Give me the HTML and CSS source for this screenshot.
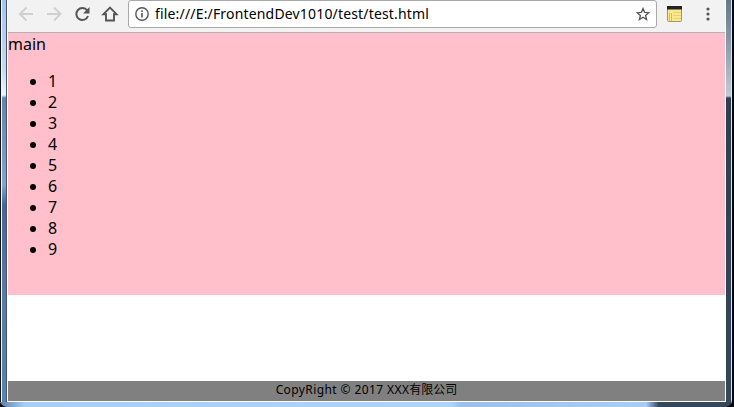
FILE: index.html
```html
<!DOCTYPE html>
<html lang="zh">
<head>
<meta charset="utf-8">
<title>test</title>
<link rel="stylesheet" href="styles.css">
</head>
<body>
<div class="window">
  <div class="edge-left"></div>
  <div class="client">
    <header class="toolbar">
      <svg class="nav" width="112" height="28" viewBox="0 0 112 28" fill="none">
        <g stroke="#d0d0d0" stroke-width="2">
          <path d="M25 14H12.500M18.500 7.500L12 14l6.500 6.500"/>
          <path d="M39 14h13M46 7.500L52.500 14 46 20.500"/>
        </g>
        <path d="M79.200 10.500A6 6 0 1 0 80 16" stroke="#555" stroke-width="2"/>
        <path d="M81.500 7v6.500H75z" fill="#555"/>
        <path d="M95.500 14.200L102 7.700l6.500 6.500H106v6.300h-8v-6.300z" stroke="#555" stroke-width="1.900"/>
      </svg>
      <div class="address">
        <svg class="info" width="14" height="14" viewBox="0 0 14 14"><circle cx="7" cy="7" r="6.200" fill="none" stroke="#555" stroke-width="1.400"/><path d="M6.200 3.300h1.600v1.600H6.200zM6.200 6h1.600v4.500H6.200z" fill="#555"/></svg>
        <span class="url">file:///E:/FrontendDev1010/test/test.html</span>
        <svg class="star" width="14" height="14" viewBox="0 0 14 14"><path d="M7 1.500l1.600 3.800 4.200.4-3.200 2.700 1 4.100L7 10.300l-3.600 2.200 1-4.100L1.200 5.700l4.200-.4z" fill="none" stroke="#555" stroke-width="1.300"/></svg>
      </div>
      <svg class="extension" width="16" height="16" viewBox="0 0 16 16"><rect x=".5" y="1" width="14" height="14.500" rx="1" fill="#f8e98c" stroke="#a8965c"/><path d="M0 0h15v3.500H0z" fill="#222"/><path d="M6 6.500h8M6 9.500h8M6 12.500h8" stroke="#e8d272"/><path d="M2.500 7v8M4.500 7v8" stroke="#f0a882"/></svg>
      <svg class="menu" width="4" height="14" viewBox="0 0 4 14" fill="#555"><circle cx="2" cy="2" r="1.600"/><circle cx="2" cy="7" r="1.600"/><circle cx="2" cy="12" r="1.600"/></svg>
    </header>
    <main class="main">main
      <ul><li>1</li><li>2</li><li>3</li><li>4</li><li>5</li><li>6</li><li>7</li><li>8</li><li>9</li></ul>
    </main>
    <footer class="footer"><span class="latin">CopyRight © 2017 XXX</span>有限公司</footer>
  </div>
  <div class="edge-right"></div>
  <div class="edge-bottom"></div>
</div>
</body>
</html>
```
FILE: styles.css
```css
* { box-sizing: border-box; }
body { margin: 0; overflow: hidden; background: #05070d; font-family: "Noto Sans", "Noto Sans CJK SC", sans-serif; color: #000; }
.window { display: grid; grid-template: 402px 5px / 7px 719px 6px; width: 732px; height: 407px; border-radius: 0 0 7px 7px; overflow: hidden; }
.edge-left { border-left: 1px solid #0b1420; background: linear-gradient(90deg, #f5faff 1px, transparent 1px, transparent 5px, #40536a 5px), linear-gradient(#a8c5e8, #c5daf2 70px, #eef5fc 95px, #6884a8 98px, #87a3c8 185px, #4a6791 205px, #5c7ba4 300px, #5d82ae); }
.client { display: flex; flex-direction: column; width: 719px; border: solid #fff; border-width: 0 1px 1px; background: #fff; }
.toolbar { display: flex; align-items: flex-start; height: 33px; border-bottom: 1px solid #b5b0b2; background: #f2f2f2; }
.nav { flex: none; margin-right: 8px; }
.address { display: flex; align-items: center; width: 529px; height: 28px; padding: 0 6px; border: 1px solid #a9a9a9; border-radius: 3px; background: #fff; }
.url { margin-left: 6px; font-size: 14px; line-height: 26px; letter-spacing: .17px; white-space: nowrap; }
.star { margin-left: auto; }
.extension { margin: 6px 0 0 10px; }
.menu { margin: 7px 0 0 22.500px; }
.main { height: 262px; background: #ffc0cb; font-size: 16px; line-height: 21px; padding-top: 1px; }
.main ul { margin: 16px 0; padding-left: 40px; }
.footer { height: 20px; margin-top: 86px; background: #808080; font-size: 12px; line-height: 18px; text-align: center; }
.latin { letter-spacing: .4px; }
.edge-right { border-right: 1px solid #dfe9f0; background: linear-gradient(#66788c, #8898a8 40px, #c0cbd4 96px, #2e3e50 98px, #34475b); }
.edge-bottom { grid-column: 1 / -1; border: solid #dfe9f0; border-width: 0 1px; background: linear-gradient(90deg, #5d82ae, #a9cef5 24px, #b0d3f8 450px, #9dbfe6 460px, #a9cef5 645px, #34475b 658px); }
```
